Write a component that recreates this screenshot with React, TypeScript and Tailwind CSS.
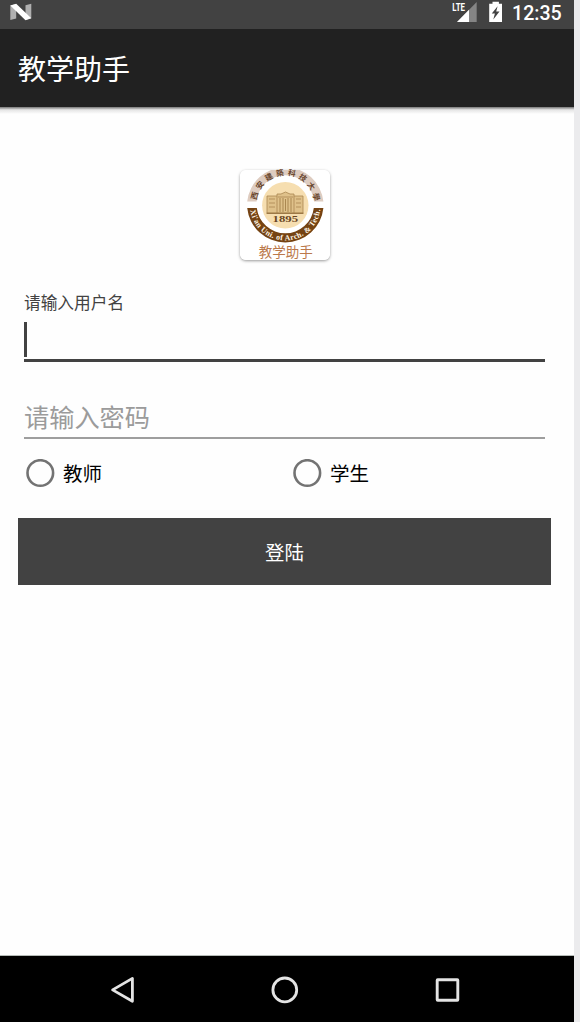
import React from "react";

const cjk = "font-['Noto_Sans_CJK_SC','Noto_Sans',sans-serif]";

function StatusBar() {
  return (
    <div className="flex h-[29px] items-start bg-[#424242] pl-[10px] pr-[11px]">
      <svg className="mt-[3px]" width="22" height="18" viewBox="0 0 22 18">
        <path d="M0.3 2.5 6.2 1v14.5L0.3 17z" fill="#b0b0b0" />
        <path d="M15.5 2.3 21.3 0.8v14.5l-5.8 1.6z" fill="#b0b0b0" />
        <path d="M0.3 2.5 6.2 0.8 21.3 15.3l-5.8 1.9z" fill="#fff" />
      </svg>
      <div className="flex-1" />
      <svg className="mt-px" width="26" height="22" viewBox="0 0 26 22">
        <path d="M24.7 1v20H5z" fill="#858585" />
        <path d="M17 8.8V21H5z" fill="#fff" />
        <path d="M0 0h14v10.5H0z" fill="#424242" />
        <text x="0.3" y="9.6" fontSize="11.5" fontWeight="700" textLength="12.7" lengthAdjust="spacingAndGlyphs" fill="#fff" fontFamily="Roboto">LTE</text>
      </svg>
      <svg className="ml-[11px] mt-px" width="14" height="22" viewBox="0 0 14 22">
        <path d="M3.5 0.7h6.4v2.1H13v18.3H0.2V2.8h3.3z" fill="#fff" />
        <path d="M8.6 5.2 2.8 12.6h3.1L4.3 18.6 10.5 10.6H7.2z" fill="#424242" />
      </svg>
      <span className="ml-[9px] mt-1 w-[51px] whitespace-nowrap font-['Roboto',sans-serif] text-[19.6px] font-medium leading-5 text-white">
        12:35
      </span>
    </div>
  );
}

function Logo() {
  return (
    <div className="h-[90px] w-[90px] rounded-[6px] bg-white">
      <svg className="overflow-visible" width="90" height="90" viewBox="0 0 90 90">
        <defs>
          <clipPath id="card">
            <rect width="90" height="90" rx="6" />
          </clipPath>
          <path id="sealTop" d="M16.3 34.3A29 29 0 0 1 74.3 34.3" />
          <path id="sealBottom" d="M10.1 35.3A35.2 35.2 0 0 0 80.5 35.3" />
        </defs>
        <g clipPath="url(#card)">
          <path d="M7.2 31.6A38.3 38.3 0 0 1 83.4 31.6H74A28.8 28.8 0 0 0 16.6 31.6z" fill="#deccc0" />
          <path d="M7.2 38H16.8A28.7 28.7 0 0 0 73.8 38H83.4A38.3 38.3 0 0 1 7.2 38z" fill="#754312" />
        </g>
        <circle cx="45.3" cy="35.3" r="23.2" fill="#f6deb0" />
        <text fontSize="7.8" fontWeight="700" fill="#68452d" fontFamily="Noto Sans CJK TC">
          <textPath href="#sealTop" startOffset="4" textLength="84" lengthAdjust="spacing">西安建築科技大學</textPath>
        </text>
        <text fontSize="7.8" fontWeight="700" fill="#fff6e7" fontFamily="Liberation Serif">
          <textPath href="#sealBottom" startOffset="5" textLength="101" lengthAdjust="spacing">Xi'an Uni. of Arch. &amp; Tech.</textPath>
        </text>
        <g fill="none" stroke="#aa8750" strokeWidth="0.8">
          <path d="M27 26h10v-2h4l4.5-2 4.5 2h4v2h9v17H27zM37 26v17M54 26v17" fill="#dfc18a" />
          <path d="M29 29h6M29 33h6M29 37h6M56 29h5M56 33h5M56 37h5M38 27h15" />
          <path d="M40 28v14M43 28v14M48 28v14M51 28v14M45.5 29v12" strokeWidth="1" />
          <path d="M26.5 43.3h37" stroke="#8e6836" strokeWidth="1" />
        </g>
        <text x="32.5" y="51.8" fontSize="8" fontWeight="700" textLength="25.5" lengthAdjust="spacingAndGlyphs" fill="#694522" fontFamily="Liberation Serif">1895</text>
        <text x="18.8" y="87.1" fontSize="13.5" textLength="54" fill="#bb794c" fontFamily="Noto Sans CJK SC" fontWeight="400">教学助手</text>
      </svg>
    </div>
  );
}

function Role({ label }: { label: string }) {
  return (
    <label className="flex h-7 items-start">
      <svg width="29" height="29" viewBox="0 0 29 29">
        <circle cx="14.3" cy="14" r="12.8" fill="none" stroke="#737373" strokeWidth="2.6" />
      </svg>
      <span className="ml-2 text-[19.5px] leading-7 text-black">{label}</span>
    </label>
  );
}

export default function App() {
  return (
    <div className={`flex h-[1022px] w-[580px] bg-[#ebebed] ${cjk}`}>
      <main className="flex w-[574px] flex-col overflow-hidden bg-[#fefefe]">
        <StatusBar />
        <header className="flex h-[78px] items-center bg-[#212121] pl-[18px]">
          <h1 className="text-[28px] font-normal leading-10 text-white">教学助手</h1>
        </header>
        <div className="h-[7px] bg-linear-to-b from-[#777] via-[#e4e4e4] via-40% to-[#fefefe]" />

        <section className="flex flex-1 flex-col">
          <div className="ml-[239.5px] mt-14 h-[90px] w-[90px] rounded-[6px] shadow-[0_1px_3px_rgba(0,0,0,0.4)]">
            <Logo />
          </div>

          <div className="ml-6 mt-[31px] flex h-[71px] w-[521px] flex-col border-b-[3px] border-[#424242]">
            <span className="h-[23px] text-[16.7px] leading-[22px] text-[#424242]">请输入用户名</span>
            <span className="mt-[8px] h-[35px] w-[2.5px] bg-[#424242]" />
          </div>

          <div className="ml-6 mt-[36px] flex h-[41px] w-[521px] border-b-2 border-[#9e9e9e]">
            <span className="text-[25.2px] leading-9 text-[#9b9b9b]">请输入密码</span>
          </div>

          <div className="ml-[26px] mt-5 grid h-7 grid-cols-[267px_1fr]">
            <Role label="教师" />
            <Role label="学生" />
          </div>

          <button className="ml-[18px] mt-[31px] flex h-[67px] w-[533px] items-center justify-center bg-[#424242] text-[19.5px] text-white">
            登陆
          </button>
        </section>

        <nav className="flex h-[67px] items-center border-t border-[#b5bbb7] bg-black pl-[110px] pt-px">
          <svg width="25" height="28" viewBox="0 0 25 28">
            <path d="M22.4 2.4v22.9L2.6 13.9z" fill="none" stroke="#e4e4e4" strokeWidth="2.8" strokeLinejoin="round" />
          </svg>
          <svg className="ml-[136px]" width="28" height="28" viewBox="0 0 28 28">
            <circle cx="13.8" cy="13.9" r="11.9" fill="none" stroke="#e4e4e4" strokeWidth="2.8" />
          </svg>
          <svg className="ml-[136px]" width="25" height="26" viewBox="0 0 25 26">
            <rect x="2.2" y="2.7" width="20.6" height="20.6" rx="0.5" fill="none" stroke="#e4e4e4" strokeWidth="2.9" />
          </svg>
        </nav>
      </main>
    </div>
  );
}
